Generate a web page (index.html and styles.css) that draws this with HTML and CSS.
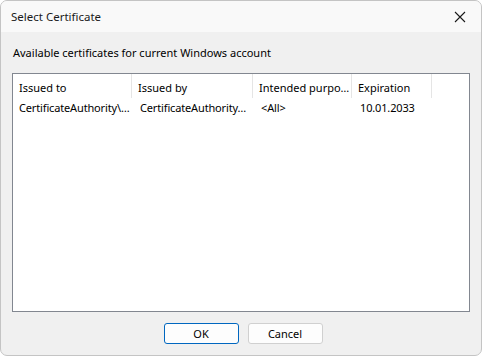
FILE: index.html
```html
<!DOCTYPE html>
<html lang="en">
<head>
  <meta charset="UTF-8">
  <title>Select Certificate</title>
  <link rel="stylesheet" href="styles.css">
</head>
<body>
  <div class="dialog">
    <div class="dialog__title">
      <span>Select Certificate</span>
      <svg class="close" width="12" height="12" viewBox="0 0 12 12">
        <path d="M1 1 L11 11 M11 1 L1 11" stroke="#1a1a1a" stroke-width="1.1" fill="none"/>
      </svg>
    </div>
    <div class="dialog__body">
      <div class="label">Available certificates for current Windows account</div>
      <div class="list">
        <div class="list__head">
          <div class="col col--to">Issued to</div>
          <div class="col col--by">Issued by</div>
          <div class="col col--purpose">Intended purpo…</div>
          <div class="col col--exp">Expiration</div>
        </div>
        <div class="list__row">
          <div class="col col--to">CertificateAuthority\…</div>
          <div class="col col--by">CertificateAuthority…</div>
          <div class="col col--purpose">&lt;All&gt;</div>
          <div class="col col--exp">10.01.2033</div>
        </div>
      </div>
      <div class="buttons">
        <button class="btn btn--default">OK</button>
        <button class="btn">Cancel</button>
      </div>
    </div>
  </div>
</body>
</html>
```

FILE: styles.css
```css
body {
  margin: 0;
  font-family: "Noto Sans", "Open Sans", sans-serif;
  font-size: 11px;
  color: #000;
  background: #fff;
}

.dialog {
  width: 480px;
  height: 354px;
  border: 1px solid #c4c4c4;
  border-radius: 7px;
  background: #f0f0f0;
  overflow: hidden;
  display: flex;
  flex-direction: column;
}

.dialog__title {
  height: 31px;
  flex: none;
  background: #f9f9f9;
  display: flex;
  align-items: center;
  justify-content: space-between;
  padding: 0 15px 0 10px;
  color: #1a1a1a;
  font-size: 11.5px;
}

.dialog__body {
  flex: 1;
  display: flex;
  flex-direction: column;
  padding: 0 11px 0 11px;
}

.label {
  height: 41px;
  display: flex;
  align-items: center;
  padding-left: 1px;
  line-height: 16px;
}

.list {
  height: 237px;
  border: 1px solid #828790;
  background: #fff;
}

.list__head {
  display: flex;
  height: 24px;
}

.list__head .col {
  border-right: 1px solid #e5e5e5;
  line-height: 21px;
  padding-top: 3px;
  padding-left: 6px;
}

.list__row {
  display: flex;
  height: 19px;
  line-height: 18px;
  padding-top: 1px;
  letter-spacing: -0.15px;
}

.list__row .col {
  padding-left: 6px;
  overflow: hidden;
}

.list__row .col--by,
.list__row .col--purpose,
.list__row .col--exp {
  padding-left: 8px;
}

.col {
  box-sizing: border-box;
  white-space: nowrap;
  overflow: hidden;
}

.col--to { width: 119px; }
.col--by { width: 121px; }
.col--purpose { width: 99px; }
.col--exp { width: 80px; }

.buttons {
  display: flex;
  justify-content: center;
  gap: 9px;
  padding-top: 11px;
  padding-left: 4px;
}

.btn {
  width: 75px;
  height: 21px;
  font: inherit;
  background: #fdfdfd;
  border: 1px solid #d0d0d0;
  border-radius: 3px;
  padding: 0;
}

.btn--default {
  border-color: #0067c0;
}
```
